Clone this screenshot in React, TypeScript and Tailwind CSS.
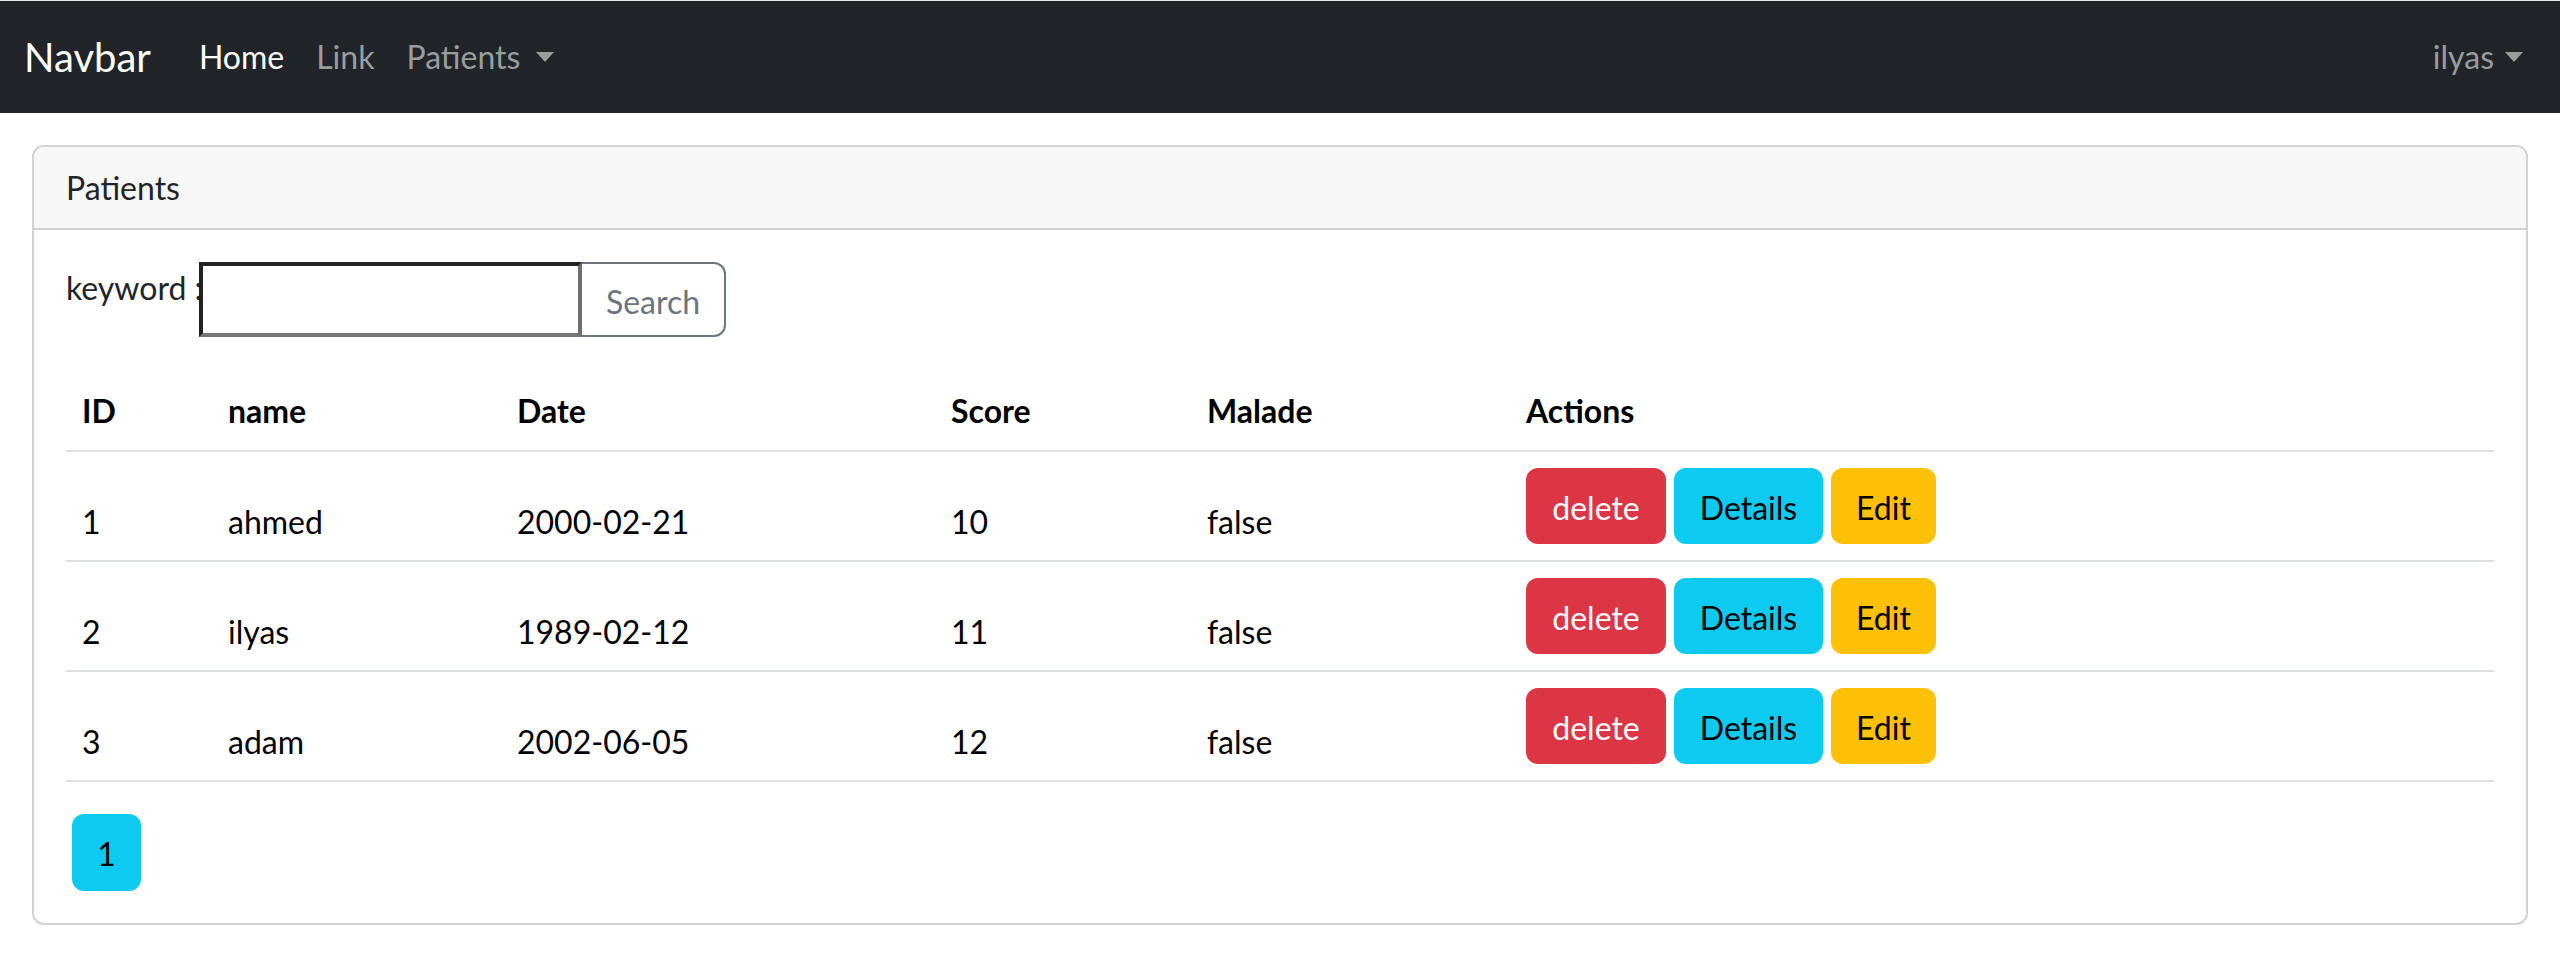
import React from "react";

const Caret = ({ ml }: { ml: string }) => (
  <span className={`${ml} inline-block h-0 w-0 border-l-[9px] border-r-[9px] border-t-[10px] border-l-transparent border-r-transparent border-t-current align-middle`} />
);

const rows = [
  { id: 1, name: "ahmed", date: "2000-02-21", score: 10, malade: "false" },
  { id: 2, name: "ilyas", date: "1989-02-12", score: 11, malade: "false" },
  { id: 3, name: "adam", date: "2002-06-05", score: 12, malade: "false" },
];

export default function App() {
  return (
    <div className="min-h-[958px] bg-white font-['Lato',sans-serif] text-[32px] leading-[48px] text-[#212529]">
      <nav className="flex h-[113px] items-center justify-between border-t border-[#e6e6e6] bg-[#212529] pl-[24px] pr-[21px]">
        <div className="flex items-center">
          <span className="mr-[32px] text-[40px] leading-[60px] text-white">Navbar</span>
          <span className="px-[16px] text-white">Home</span>
          <span className="px-[16px] text-[#9a9da0]">Link</span>
          <span className="flex items-center px-[16px] text-[#9a9da0]">
            Patients
            <Caret ml="ml-[16px]" />
          </span>
        </div>
        <span className="flex items-center px-[16px] text-[#9a9da0]">
          ilyas
          <Caret ml="ml-[11px]" />
        </span>
      </nav>

      <div className="mx-[32px] mt-[32px] rounded-[12px] border-2 border-[#d2d2d2]">
        <div className="rounded-t-[10px] border-b-2 border-[#d2d2d2] bg-[#f7f7f7] px-[32px] pb-[16px] pt-[17px]">
          Patients
        </div>
        <div className="p-[32px]">
          <div className="flex items-start">
            <span className="mt-[2px] w-[133px] whitespace-nowrap">keyword :</span>
            <div className="h-[75px] w-[383px] border-b-[4px] border-l-[4px] border-r-[4px] border-t-[4px] border-b-[#767676] border-l-[#222222] border-r-[#6f6f6f] border-t-[#222222] bg-white" />
            <div className="flex h-[75px] w-[144px] items-center justify-center rounded-r-[12px] border-2 border-l-0 border-[#6c757d] pt-[4px] text-[#6c757d]">
              Search
            </div>
          </div>

          <table className="mt-[33px] w-full table-fixed border-collapse text-black">
            <colgroup>
              <col className="w-[146px]" />
              <col className="w-[289px]" />
              <col className="w-[434px]" />
              <col className="w-[256px]" />
              <col className="w-[319px]" />
              <col />
            </colgroup>
            <thead>
              <tr className="border-b-2 border-[#dee2e6]">
                <th className="px-[16px] pb-[15px] pt-[17px] text-left font-bold">ID</th>
                <th className="px-[16px] pb-[15px] pt-[17px] text-left font-bold">name</th>
                <th className="px-[16px] pb-[15px] pt-[17px] text-left font-bold">Date</th>
                <th className="px-[16px] pb-[15px] pt-[17px] text-left font-bold">Score</th>
                <th className="px-[16px] pb-[15px] pt-[17px] text-left font-bold">Malade</th>
                <th className="px-[16px] pb-[15px] pt-[17px] text-left font-bold">Actions</th>
              </tr>
            </thead>
            <tbody>
              {rows.map((r) => (
                <tr key={r.id} className="border-b-2 border-[#dee2e6]">
                  <td className="px-[16px] pb-[14px] align-bottom">{r.id}</td>
                  <td className="px-[16px] pb-[14px] align-bottom">{r.name}</td>
                  <td className="px-[16px] pb-[14px] align-bottom">{r.date}</td>
                  <td className="px-[16px] pb-[14px] align-bottom">{r.score}</td>
                  <td className="px-[16px] pb-[14px] align-bottom">{r.malade}</td>
                  <td className="px-[16px] py-[16px]">
                    <div className="flex gap-[8px]">
                      <span className="flex h-[76px] w-[140px] items-center justify-center rounded-[12px] bg-[#dc3545] pt-[3px] text-white">
                        delete
                      </span>
                      <span className="flex h-[76px] w-[149px] items-center justify-center rounded-[12px] bg-[#0dcaf0] pt-[3px] text-black">
                        Details
                      </span>
                      <span className="flex h-[76px] w-[105px] items-center justify-center rounded-[12px] bg-[#ffc107] pt-[3px] text-black">
                        Edit
                      </span>
                    </div>
                  </td>
                </tr>
              ))}
            </tbody>
          </table>

          <div className="mt-[32px] flex">
            <span className="ml-[6px] flex h-[77px] w-[69px] items-center justify-center rounded-[12px] bg-[#0dcaf0] pt-[3px] text-black">
              1
            </span>
          </div>
        </div>
      </div>
    </div>
  );
}
